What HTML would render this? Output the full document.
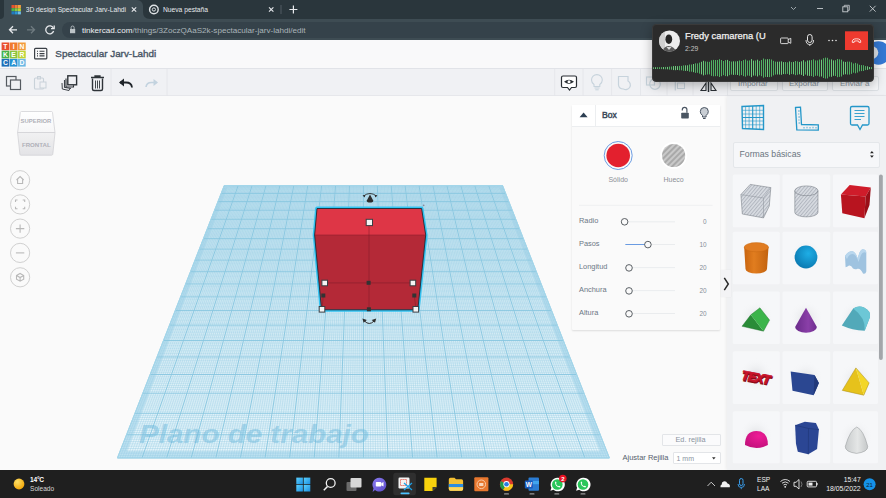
<!DOCTYPE html>
<html><head><meta charset="utf-8">
<style>
*{margin:0;padding:0;box-sizing:border-box}
html,body{width:886px;height:498px;overflow:hidden;background:#fafafa;font-family:"Liberation Sans",sans-serif}
.a{position:absolute}
svg{position:absolute;overflow:visible}
.t{position:absolute;white-space:nowrap;line-height:1}
</style></head><body>

<!-- ===== Chrome tab strip ===== -->
<div class="a" style="left:0;top:0;width:886px;height:19px;background:#2a363c"></div>
<div class="a" style="left:4px;top:0;width:139px;height:19px;background:#3e4c53;border-radius:0 6px 0 0"></div>
<svg style="left:0;top:0" width="886" height="41">
  <path d="M0 19 Q4 19 4 15 V19Z" fill="#3e4c53"/>
  <path d="M143 12 V19 H150 Q143 19 143 12Z" fill="#3e4c53"/>
  <!-- favicon -->
  <g transform="translate(11.5,5)">
    <rect x="0" y="0" width="3" height="3" fill="#e8502f"/><rect x="3.2" y="0" width="3" height="3" fill="#f07a30"/><rect x="6.4" y="0" width="3" height="3" fill="#f4a040"/>
    <rect x="0" y="3.2" width="3" height="3" fill="#4cb748"/><rect x="3.2" y="3.2" width="3" height="3" fill="#8dc63f"/><rect x="6.4" y="3.2" width="3" height="3" fill="#b8d432"/>
    <rect x="0" y="6.4" width="3" height="3" fill="#1f7ac0"/><rect x="3.2" y="6.4" width="3" height="3" fill="#2a96d6"/><rect x="6.4" y="6.4" width="3" height="3" fill="#70bde8"/>
  </g>
  <!-- tab close x -->
  <path d="M131.8 7.3 L136.2 11.7 M136.2 7.3 L131.8 11.7" stroke="#e8eaed" stroke-width="1.1"/>
  <!-- chrome icon tab2 -->
  <circle cx="153.9" cy="9.5" r="4.3" fill="none" stroke="#dfe3e6" stroke-width="1.4"/>
  <circle cx="153.9" cy="9.5" r="1.6" fill="none" stroke="#dfe3e6" stroke-width="1"/>
  <path d="M269 7.3 L273.4 11.7 M273.4 7.3 L269 11.7" stroke="#e8eaed" stroke-width="1.1"/>
  <path d="M281 5 V14" stroke="#5a666c" stroke-width="0.8"/>
  <path d="M293.4 5.5 V13.5 M289.4 9.5 H297.4" stroke="#e8eaed" stroke-width="1.2"/>
  <!-- window controls -->
  <path d="M791 7 L793.5 9.5 L796 7" stroke="#aab3b8" stroke-width="0.9" fill="none"/>
  <path d="M817 8.5 H823" stroke="#c8cdd0" stroke-width="0.9"/>
  <rect x="842.8" y="6.8" width="5" height="5" fill="none" stroke="#c8cdd0" stroke-width="0.9"/>
  <path d="M844.3 6.8 V5.3 H849.3 V10.3 H847.8" stroke="#c8cdd0" stroke-width="0.8" fill="none"/>
  <path d="M869.8 5.8 L875.6 11.6 M875.6 5.8 L869.8 11.6" stroke="#c8cdd0" stroke-width="0.9"/>
</svg>
<div class="t" style="left:25.7px;top:6.6px;font-size:6.7px;color:#e8eaed;width:103px;overflow:hidden">3D design Spectacular Jarv-Lahdi</div>
<div class="t" style="left:163px;top:6.6px;font-size:6.7px;color:#e8eaed">Nueva pestaña</div>

<!-- ===== Chrome toolbar ===== -->
<div class="a" style="left:0;top:19px;width:886px;height:21px;background:#3e4c53"></div>
<div class="a" style="left:62px;top:22.3px;width:824px;height:15.8px;background:#35424a;border-radius:8px 0 0 8px"></div>
<svg style="left:0;top:0" width="886" height="41">
  <path d="M17 29.8 H9.5 M13 26.3 L9.5 29.8 L13 33.3" stroke="#e8eaed" stroke-width="1.3" fill="none"/>
  <path d="M27 29.8 H34.5 M31 26.3 L34.5 29.8 L31 33.3" stroke="#6f7b80" stroke-width="1.3" fill="none"/>
  <path d="M53.3 28 A4 4 0 1 0 53.6 31" stroke="#e8eaed" stroke-width="1.3" fill="none"/>
  <path d="M54.2 25.5 V28.6 H51" stroke="#e8eaed" stroke-width="1.3" fill="none"/>
  <rect x="70" y="29" width="5.2" height="4.2" fill="#bcc3c7"/>
  <path d="M71.1 29 V27.5 A1.5 1.5 0 0 1 74.1 27.5 V29" stroke="#bcc3c7" stroke-width="0.9" fill="none"/>
</svg>
<div class="t" style="left:82px;top:26.8px;font-size:8.1px;color:#aab4b9"><span style="color:#eef0f2">tinkercad.com</span>/things/3ZoczQAaS2k-spectacular-jarv-lahdi/edit</div>

<!-- ===== Tinkercad header ===== -->
<div class="a" style="left:0;top:40px;width:886px;height:29px;background:#f9f9fa;border-bottom:1px solid #e1e3e8"></div>
<svg style="left:0;top:0" width="886" height="100">
  <g transform="translate(1.6,42.5)" font-family="Liberation Sans" font-size="6.8" font-weight="bold" fill="#fff" text-anchor="middle">
    <rect x="0" y="0" width="7.7" height="7.7" fill="#e94f2e"/><rect x="8.2" y="0" width="7.7" height="7.7" fill="#f07b2f"/><rect x="16.4" y="0" width="7.7" height="7.7" fill="#f39c3c"/>
    <rect x="0" y="8.2" width="7.7" height="7.7" fill="#47b34a"/><rect x="8.2" y="8.2" width="7.7" height="7.7" fill="#8cc53f"/><rect x="16.4" y="8.2" width="7.7" height="7.7" fill="#bcd437"/>
    <rect x="0" y="16.4" width="7.7" height="7.7" fill="#1e6fb8"/><rect x="8.2" y="16.4" width="7.7" height="7.7" fill="#2792d3"/><rect x="16.4" y="16.4" width="7.7" height="7.7" fill="#6cb9e5"/>
    <text x="3.85" y="6.3">T</text><text x="12.05" y="6.3">I</text><text x="20.25" y="6.3">N</text>
    <text x="3.85" y="14.5">K</text><text x="12.05" y="14.5">E</text><text x="20.25" y="14.5">R</text>
    <text x="3.85" y="22.7">C</text><text x="12.05" y="22.7">A</text><text x="20.25" y="22.7">D</text>
  </g>
  <!-- menu icon -->
  <rect x="34.6" y="48.3" width="12.2" height="10.6" rx="1" fill="none" stroke="#3a3f45" stroke-width="1.2"/>
  <path d="M37 51.3 H38 M37 53.6 H38 M37 55.9 H38 M39.5 51.3 H44.5 M39.5 53.6 H44.5 M39.5 55.9 H44.5" stroke="#3a3f45" stroke-width="1.1"/>
  <!-- avatar behind popup -->
  <circle cx="878.5" cy="53" r="11.7" fill="#3579d4"/><circle cx="872" cy="52.6" r="6.3" fill="#dfe3e8"/>
</svg>
<div class="t" style="left:55.3px;top:49px;font-size:9.9px;color:#4b5868;-webkit-text-stroke:0.4px #4b5868">Spectacular Jarv-Lahdi</div>

<!-- ===== Tinkercad toolbar ===== -->
<div class="a" style="left:0;top:69px;width:886px;height:27.2px;background:#f0f1f4;border-bottom:1px solid #e6e7eb"></div>
<svg style="left:0;top:0" width="886" height="100">
  <path d="M111 69 V96 M167 69 V96 M554.7 69 V96 M583 69 V96 M611.6 69 V96 M640.5 69 V96 M667 69 V96 M693 69 V96 M727.5 69 V96" stroke="#e2e5e9" stroke-width="0.8"/>
  <!-- copy -->
  <rect x="6.5" y="76.5" width="9.5" height="9.5" fill="none" stroke="#555a60" stroke-width="1.2"/>
  <rect x="10.5" y="80" width="10" height="9.5" fill="#f0f1f4" stroke="#555a60" stroke-width="1.2"/>
  <!-- paste -->
  <rect x="34.5" y="78" width="9" height="11" rx="1" fill="none" stroke="#c9d2d9" stroke-width="1.1"/>
  <rect x="37.5" y="76.5" width="3" height="2.5" fill="none" stroke="#c9d2d9" stroke-width="1"/>
  <rect x="40" y="82" width="6" height="6" fill="#f0f1f4" stroke="#c9d2d9" stroke-width="1"/>
  <!-- duplicate -->
  <path d="M62 83 L62.3 89 L69 90.5 L70 88" stroke="#3f444a" stroke-width="1" fill="none"/>
  <path d="M64.5 80 V87.3 L71 88.5" stroke="#3f444a" stroke-width="1.1" fill="none"/>
  <rect x="67.8" y="75.8" width="8.8" height="9" fill="#f0f1f4" stroke="#2c3136" stroke-width="1.4"/>
  <path d="M66 78.5 V87 H73.5 V85.3" stroke="#2c3136" stroke-width="1.1" fill="none"/>
  <!-- trash -->
  <path d="M91 77.5 H104 M95 77.5 V76 H100 V77.5" stroke="#2f3439" stroke-width="1.3" fill="none"/>
  <path d="M92.5 78.5 V89 Q92.5 90.5 94 90.5 H101 Q102.5 90.5 102.5 89 V78.5" stroke="#2f3439" stroke-width="1.4" fill="none"/>
  <path d="M95.5 80.5 V88.5 M97.5 80.5 V88.5 M99.5 80.5 V88.5" stroke="#2f3439" stroke-width="0.9"/>
  <!-- undo -->
  <path d="M120 82.5 H126 Q131.5 82.5 132 87.5" stroke="#1f2429" stroke-width="1.8" fill="none"/>
  <path d="M119 82.5 L124 78.5 V86.5Z" fill="#1f2429"/>
  <!-- redo -->
  <path d="M157 82.5 H151.5 Q146.5 82.5 146 87" stroke="#c3d3df" stroke-width="1.6" fill="none"/>
  <path d="M158 82.5 L153.5 79 V86Z" fill="#c3d3df"/>
  <!-- eye note -->
  <path d="M563 76 H575 Q576.5 76 576.5 77.5 V86 Q576.5 87.5 575 87.5 H571.5 L569.5 90 L567.5 87.5 H563 Q561.5 87.5 561.5 86 V77.5 Q561.5 76 563 76Z" fill="#fff" stroke="#2a2f34" stroke-width="1.2"/>
  <path d="M564 81.8 Q569 77.5 574 81.8 Q569 86 564 81.8Z" fill="#2a2f34"/>
  <circle cx="569" cy="81.8" r="1.5" fill="#fff"/>
  <!-- bulb -->
  <path d="M594 84.5 Q591.5 82.5 591.5 80 A5.4 5.4 0 0 1 602.3 80 Q602.3 82.5 599.8 84.5 V86.5 H594Z" fill="none" stroke="#c7d3dc" stroke-width="1.1"/>
  <path d="M594.5 88 H599.5 M595.3 89.8 H598.7" stroke="#c7d3dc" stroke-width="1"/>
  <!-- group -->
  <path d="M618.5 76.5 H628 V81 A4.5 4.5 0 1 1 623.5 89 Q619 89 618.5 85Z" fill="none" stroke="#c7d3dc" stroke-width="1.2"/>
  <!-- ungroup -->
  <rect x="646.5" y="77" width="8" height="8" fill="none" stroke="#c7d3dc" stroke-width="1.1"/><circle cx="655" cy="84" r="5.3" fill="none" stroke="#c7d3dc" stroke-width="1.2"/>
  <!-- align -->
  <path d="M675.3 81.5 V90.5" stroke="#c7d3dc" stroke-width="1.2"/><rect x="677.5" y="83" width="7" height="5.5" fill="none" stroke="#c7d3dc" stroke-width="1"/>
  <!-- mirror -->
  <path d="M708.5 80 V92" stroke="#2b3035" stroke-width="1.5"/>
  <path d="M706 83 L701 90.5 H706Z M711 83 L716 90.5 H711Z" fill="none" stroke="#2b3035" stroke-width="1.1"/>
</svg>
<!-- Import/Export/Send buttons (under popup) -->
<div class="a" style="left:730px;top:76px;width:47.5px;height:14.5px;border:1px solid #dde1e5;border-radius:2px;background:#f6f7f9"></div>
<div class="a" style="left:781.7px;top:76px;width:46.5px;height:14.5px;border:1px solid #dde1e5;border-radius:2px;background:#f6f7f9"></div>
<div class="a" style="left:831.7px;top:76px;width:47.5px;height:14.5px;border:1px solid #dde1e5;border-radius:2px;background:#f6f7f9"></div>
<div class="t" style="left:738px;top:79.5px;font-size:8px;color:#8a96a2">Importar</div>
<div class="t" style="left:789px;top:79.5px;font-size:8px;color:#8a96a2">Exportar</div>
<div class="t" style="left:840px;top:79.5px;font-size:8px;color:#8a96a2">Enviar a</div>

<!-- ===== Workplane grid ===== -->
<svg style="left:0;top:0" width="886" height="470">
<polygon points="224.25,185.5 502.55,185.5 609.40,458.0 117.40,458.0" fill="#bde1f1"/><defs><linearGradient id="gfill" x1="0" y1="185.5" x2="0" y2="458.0" gradientUnits="userSpaceOnUse"><stop offset="0" stop-color="#d2ecf6"/><stop offset="0.45" stop-color="#e0f2f9"/><stop offset="1" stop-color="#e6f5fb"/></linearGradient></defs><polygon points="227.32,187.67 499.48,187.67 599.97,451.33 126.83,451.33" fill="url(#gfill)"/><path d="M225.64 185.5L119.86 458.0M223.95 186.27H502.85M227.03 185.5L122.32 458.0M223.64 187.05H503.16M228.42 185.5L124.78 458.0M223.34 187.83H503.46M229.82 185.5L127.24 458.0M223.03 188.61H503.77M231.21 185.5L129.70 458.0M222.72 189.40H504.08M232.60 185.5L132.16 458.0M222.41 190.19H504.39M233.99 185.5L134.62 458.0M222.10 190.98H504.70M235.38 185.5L137.08 458.0M221.79 191.77H505.01M236.77 185.5L139.54 458.0M221.48 192.57H505.32M239.56 185.5L144.46 458.0M220.84 194.19H505.96M240.95 185.5L146.92 458.0M220.53 195.00H506.27M242.34 185.5L149.38 458.0M220.21 195.81H506.59M243.73 185.5L151.84 458.0M219.89 196.63H506.91M245.12 185.5L154.30 458.0M219.56 197.45H507.24M246.51 185.5L156.76 458.0M219.24 198.28H507.56M247.91 185.5L159.22 458.0M218.92 199.10H507.88M249.30 185.5L161.68 458.0M218.59 199.94H508.21M250.69 185.5L164.14 458.0M218.26 200.77H508.54M253.47 185.5L169.06 458.0M217.60 202.46H509.20M254.86 185.5L171.52 458.0M217.27 203.31H509.53M256.25 185.5L173.98 458.0M216.93 204.16H509.87M257.65 185.5L176.44 458.0M216.60 205.01H510.20M259.04 185.5L178.90 458.0M216.26 205.87H510.54M260.43 185.5L181.36 458.0M215.92 206.74H510.88M261.82 185.5L183.82 458.0M215.58 207.61H511.22M263.21 185.5L186.28 458.0M215.24 208.48H511.56M264.60 185.5L188.74 458.0M214.90 209.35H511.90M267.39 185.5L193.66 458.0M214.21 211.12H512.59M268.78 185.5L196.12 458.0M213.86 212.00H512.94M270.17 185.5L198.58 458.0M213.51 212.90H513.29M271.56 185.5L201.04 458.0M213.16 213.79H513.64M272.95 185.5L203.50 458.0M212.80 214.69H514.00M274.34 185.5L205.96 458.0M212.45 215.60H514.35M275.74 185.5L208.42 458.0M212.09 216.51H514.71M277.13 185.5L210.88 458.0M211.73 217.42H515.07M278.52 185.5L213.34 458.0M211.37 218.34H515.43M281.30 185.5L218.26 458.0M210.65 220.19H516.15M282.69 185.5L220.72 458.0M210.28 221.12H516.52M284.08 185.5L223.18 458.0M209.92 222.05H516.88M285.48 185.5L225.64 458.0M209.55 222.99H517.25M286.87 185.5L228.10 458.0M209.18 223.94H517.62M288.26 185.5L230.56 458.0M208.81 224.89H517.99M289.65 185.5L233.02 458.0M208.43 225.84H518.37M291.04 185.5L235.48 458.0M208.06 226.80H518.74M292.43 185.5L237.94 458.0M207.68 227.76H519.12M295.22 185.5L242.86 458.0M206.92 229.70H519.88M296.61 185.5L245.32 458.0M206.54 230.68H520.26M298.00 185.5L247.78 458.0M206.15 231.66H520.65M299.39 185.5L250.24 458.0M205.76 232.65H521.04M300.78 185.5L252.70 458.0M205.37 233.64H521.43M302.17 185.5L255.16 458.0M204.98 234.63H521.82M303.57 185.5L257.62 458.0M204.59 235.64H522.21M304.96 185.5L260.08 458.0M204.20 236.64H522.60M306.35 185.5L262.54 458.0M203.80 237.65H523.00M309.13 185.5L267.46 458.0M203.00 239.69H523.80M310.52 185.5L269.92 458.0M202.60 240.72H524.20M311.91 185.5L272.38 458.0M202.19 241.75H524.61M313.31 185.5L274.84 458.0M201.79 242.79H525.01M314.70 185.5L277.30 458.0M201.38 243.83H525.42M316.09 185.5L279.76 458.0M200.97 244.88H525.83M317.48 185.5L282.22 458.0M200.55 245.93H526.25M318.87 185.5L284.68 458.0M200.14 246.99H526.66M320.26 185.5L287.14 458.0M199.72 248.05H527.08M323.05 185.5L292.06 458.0M198.88 250.20H527.92M324.44 185.5L294.52 458.0M198.46 251.28H528.34M325.83 185.5L296.98 458.0M198.03 252.36H528.77M327.22 185.5L299.44 458.0M197.61 253.45H529.19M328.61 185.5L301.90 458.0M197.18 254.55H529.62M330.00 185.5L304.36 458.0M196.74 255.65H530.06M331.40 185.5L306.82 458.0M196.31 256.76H530.49M332.79 185.5L309.28 458.0M195.87 257.87H530.93M334.18 185.5L311.74 458.0M195.43 258.99H531.37M336.96 185.5L316.66 458.0M194.55 261.25H532.25M338.35 185.5L319.12 458.0M194.10 262.39H532.70M339.74 185.5L321.58 458.0M193.65 263.53H533.15M341.14 185.5L324.04 458.0M193.20 264.68H533.60M342.53 185.5L326.50 458.0M192.75 265.84H534.05M343.92 185.5L328.96 458.0M192.29 267.00H534.51M345.31 185.5L331.42 458.0M191.83 268.17H534.97M346.70 185.5L333.88 458.0M191.37 269.35H535.43M348.09 185.5L336.34 458.0M190.91 270.53H535.89M350.88 185.5L341.26 458.0M189.98 272.91H536.82M352.27 185.5L343.72 458.0M189.51 274.11H537.29M353.66 185.5L346.18 458.0M189.03 275.32H537.77M355.05 185.5L348.64 458.0M188.56 276.53H538.24M356.44 185.5L351.10 458.0M188.08 277.75H538.72M357.83 185.5L353.56 458.0M187.60 278.98H539.20M359.23 185.5L356.02 458.0M187.11 280.21H539.69M360.62 185.5L358.48 458.0M186.63 281.45H540.17M362.01 185.5L360.94 458.0M186.14 282.70H540.66M364.79 185.5L365.86 458.0M185.15 285.21H541.65M366.18 185.5L368.32 458.0M184.65 286.48H542.15M367.57 185.5L370.78 458.0M184.15 287.76H542.65M368.97 185.5L373.24 458.0M183.65 289.04H543.15M370.36 185.5L375.70 458.0M183.15 290.33H543.65M371.75 185.5L378.16 458.0M182.64 291.62H544.16M373.14 185.5L380.62 458.0M182.13 292.93H544.67M374.53 185.5L383.08 458.0M181.61 294.24H545.19M375.92 185.5L385.54 458.0M181.09 295.56H545.71M378.71 185.5L390.46 458.0M180.05 298.22H546.75M380.10 185.5L392.92 458.0M179.53 299.56H547.27M381.49 185.5L395.38 458.0M179.00 300.91H547.80M382.88 185.5L397.84 458.0M178.46 302.27H548.34M384.27 185.5L400.30 458.0M177.93 303.63H548.87M385.66 185.5L402.76 458.0M177.39 305.01H549.41M387.06 185.5L405.22 458.0M176.85 306.39H549.95M388.45 185.5L407.68 458.0M176.30 307.78H550.50M389.84 185.5L410.14 458.0M175.76 309.18H551.04M392.62 185.5L415.06 458.0M174.65 312.00H552.15M394.01 185.5L417.52 458.0M174.09 313.42H552.71M395.40 185.5L419.98 458.0M173.53 314.85H553.27M396.80 185.5L422.44 458.0M172.97 316.29H553.83M398.19 185.5L424.90 458.0M172.40 317.73H554.40M399.58 185.5L427.36 458.0M171.83 319.19H554.97M400.97 185.5L429.82 458.0M171.25 320.66H555.55M402.36 185.5L432.28 458.0M170.68 322.13H556.12M403.75 185.5L434.74 458.0M170.09 323.61H556.71M406.54 185.5L439.66 458.0M168.92 326.61H557.88M407.93 185.5L442.12 458.0M168.33 328.12H558.47M409.32 185.5L444.58 458.0M167.73 329.64H559.07M410.71 185.5L447.04 458.0M167.13 331.16H559.67M412.10 185.5L449.50 458.0M166.53 332.70H560.27M413.49 185.5L451.96 458.0M165.92 334.25H560.88M414.89 185.5L454.42 458.0M165.31 335.81H561.49M416.28 185.5L456.88 458.0M164.70 337.37H562.10M417.67 185.5L459.34 458.0M164.08 338.95H562.72M420.45 185.5L464.26 458.0M162.83 342.13H563.97M421.84 185.5L466.72 458.0M162.20 343.74H564.60M423.23 185.5L469.18 458.0M161.57 345.35H565.23M424.63 185.5L471.64 458.0M160.93 346.98H565.87M426.02 185.5L474.10 458.0M160.29 348.62H566.51M427.41 185.5L476.56 458.0M159.64 350.26H567.16M428.80 185.5L479.02 458.0M158.99 351.92H567.81M430.19 185.5L481.48 458.0M158.34 353.59H568.46M431.58 185.5L483.94 458.0M157.68 355.27H569.12M434.37 185.5L488.86 458.0M156.35 358.66H570.45M435.76 185.5L491.32 458.0M155.68 360.37H571.12M437.15 185.5L493.78 458.0M155.01 362.10H571.79M438.54 185.5L496.24 458.0M154.33 363.83H572.47M439.93 185.5L498.70 458.0M153.64 365.58H573.16M441.32 185.5L501.16 458.0M152.95 367.33H573.85M442.72 185.5L503.62 458.0M152.26 369.10H574.54M444.11 185.5L506.08 458.0M151.56 370.88H575.24M445.50 185.5L508.54 458.0M150.86 372.67H575.94M448.28 185.5L513.46 458.0M149.44 376.29H577.36M449.67 185.5L515.92 458.0M148.72 378.12H578.08M451.06 185.5L518.38 458.0M148.00 379.96H578.80M452.46 185.5L520.84 458.0M147.27 381.82H579.53M453.85 185.5L523.30 458.0M146.54 383.68H580.26M455.24 185.5L525.76 458.0M145.80 385.56H581.00M456.63 185.5L528.22 458.0M145.06 387.45H581.74M458.02 185.5L530.68 458.0M144.32 389.35H582.48M459.41 185.5L533.14 458.0M143.56 391.27H583.24M462.20 185.5L538.06 458.0M142.05 395.15H584.75M463.59 185.5L540.52 458.0M141.28 397.10H585.52M464.98 185.5L542.98 458.0M140.51 399.07H586.29M466.37 185.5L545.44 458.0M139.73 401.06H587.07M467.76 185.5L547.90 458.0M138.94 403.06H587.86M469.15 185.5L550.36 458.0M138.16 405.07H588.64M470.55 185.5L552.82 458.0M137.36 407.09H589.44M471.94 185.5L555.28 458.0M136.56 409.14H590.24M473.33 185.5L557.74 458.0M135.75 411.19H591.05M476.11 185.5L562.66 458.0M134.13 415.35H592.67M477.50 185.5L565.12 458.0M133.30 417.45H593.50M478.89 185.5L567.58 458.0M132.47 419.56H594.33M480.29 185.5L570.04 458.0M131.64 421.69H595.16M481.68 185.5L572.50 458.0M130.80 423.84H596.00M483.07 185.5L574.96 458.0M129.95 426.00H596.85M484.46 185.5L577.42 458.0M129.09 428.18H597.71M485.85 185.5L579.88 458.0M128.23 430.37H598.57M487.24 185.5L582.34 458.0M127.37 432.58H599.43M490.03 185.5L587.26 458.0M125.62 437.05H601.18M491.42 185.5L589.72 458.0M124.73 439.30H602.07M492.81 185.5L592.18 458.0M123.84 441.58H602.96M494.20 185.5L594.64 458.0M122.94 443.87H603.86M495.59 185.5L597.10 458.0M122.03 446.18H604.77M496.98 185.5L599.56 458.0M121.12 448.51H605.68M498.38 185.5L602.02 458.0M120.20 450.86H606.60M499.77 185.5L604.48 458.0M119.27 453.22H607.53M501.16 185.5L606.94 458.0M118.34 455.60H608.46" stroke="#97cde3" stroke-width="0.4" fill="none"/><path d="M224.25 185.5L117.40 458.0M224.25 185.50H502.55M238.16 185.5L142.00 458.0M221.16 193.38H505.64M252.08 185.5L166.60 458.0M217.93 201.61H508.87M266.00 185.5L191.20 458.0M214.55 210.23H512.25M279.91 185.5L215.80 458.0M211.01 219.26H515.79M293.82 185.5L240.40 458.0M207.30 228.73H519.50M307.74 185.5L265.00 458.0M203.40 238.67H523.40M321.65 185.5L289.60 458.0M199.30 249.12H527.50M335.57 185.5L314.20 458.0M194.99 260.12H531.81M349.48 185.5L338.80 458.0M190.44 271.71H536.36M363.40 185.5L363.40 458.0M185.65 283.95H541.15M377.31 185.5L388.00 458.0M180.57 296.89H546.23M391.23 185.5L412.60 458.0M175.20 310.58H551.60M405.14 185.5L437.20 458.0M169.51 325.11H557.29M419.06 185.5L461.80 458.0M163.46 340.54H563.34M432.97 185.5L486.40 458.0M157.02 356.96H569.78M446.89 185.5L511.00 458.0M150.15 374.48H576.65M460.80 185.5L535.60 458.0M142.81 393.20H583.99M474.72 185.5L560.20 458.0M134.94 413.26H591.86M488.63 185.5L584.80 458.0M126.50 434.80H600.30M502.55 185.5L609.40 458.0M117.40 458.00H609.40" stroke="#88c6df" stroke-width="0.95" fill="none"/><polygon points="224.25,185.5 502.55,185.5 609.40,458.0 117.40,458.0" fill="none" stroke="#a9d9ec" stroke-width="0.8"/>
</svg>
<div class="t" style="left:138.5px;top:421px;font-size:26.5px;font-weight:bold;font-style:italic;color:rgba(112,186,220,0.5);transform-origin:0 0;transform:scaleX(1.115)">Plano de trabajo</div>

<!-- ===== Red box ===== -->
<svg style="left:0;top:0" width="886" height="470">
  <polygon points="317,208.5 421.6,208.5 425.7,235 417.8,309.8 321.5,309.8 314.6,235" fill="none" stroke="#33c3f2" stroke-width="3.8" stroke-linejoin="round"/>
  <polygon points="317,208.5 421.6,208.5 425.7,235 314.6,235" fill="#de3646"/>
  <polygon points="314.6,235 425.7,235 417.8,309.8 321.5,309.8" fill="#b42937"/>
  <polygon points="317,208.5 421.6,208.5 425.7,235 417.8,309.8 321.5,309.8 314.6,235" fill="none" stroke="#1d2b38" stroke-width="0.9" stroke-linejoin="round"/>
  <path d="M314.6 235 H425.7" stroke="#8e1f2b" stroke-width="0.6"/>
  <path d="M369 222 V309 M325 282.9 H413 M323.3 295.5 L322 309 M414.3 295.5 L416 309" stroke="#7d1c28" stroke-width="0.5"/>
  <rect x="366.2" y="219.3" width="6.3" height="6.3" fill="#f4f4f4" stroke="#3b3f44" stroke-width="1"/>
  <rect x="321.9" y="280.2" width="5.6" height="5.6" fill="#f4f4f4" stroke="#3b3f44" stroke-width="1"/>
  <rect x="410.1" y="280.2" width="5.6" height="5.6" fill="#f4f4f4" stroke="#3b3f44" stroke-width="1"/>
  <rect x="319.2" y="306.5" width="5.6" height="5.6" fill="#f4f4f4" stroke="#3b3f44" stroke-width="1"/>
  <rect x="413" y="306.5" width="5.6" height="5.6" fill="#f4f4f4" stroke="#3b3f44" stroke-width="1"/>
  <rect x="366.6" y="280.8" width="4" height="4" fill="#333"/>
  <rect x="321.3" y="293.5" width="4" height="4" fill="#333"/>
  <rect x="412.3" y="293.5" width="4" height="4" fill="#333"/>
  <rect x="366.9" y="307.3" width="4" height="4" fill="#333"/>
  <circle cx="423.7" cy="205.4" r="0.8" fill="#889"/>
  <!-- rotate top -->
  <path d="M363.5 196 Q370 191 376.5 196" stroke="#2d2d2d" stroke-width="0.9" fill="none"/>
  <path d="M362.5 195.3 L364.8 197.5 L365.2 195Z M377.5 195.3 L375.2 197.5 L374.8 195Z" fill="#2d2d2d"/>
  <path d="M370 194.6 L373.2 200.5 Q373.5 202.6 370 202.6 Q366.5 202.6 366.8 200.5Z" fill="#2d2d2d"/>
  <!-- rotate bottom -->
  <g transform="translate(0,1.2)">
  <path d="M364.5 319.8 Q369.3 324.8 374.1 319.8" stroke="#2d2d2d" stroke-width="1" fill="none"/>
  <path d="M362.4 317.3 L366.9 318.7 L363.6 321.6Z M376.2 317.3 L371.7 318.7 L375 321.6Z" fill="#2d2d2d"/>
  </g>
</svg>

<!-- ===== View cube + nav ===== -->
<svg style="left:0;top:0" width="120" height="300">
  <defs>
    <linearGradient id="vcT" x1="0" y1="0" x2="0" y2="1"><stop offset="0" stop-color="#ffffff"/><stop offset="1" stop-color="#f6f6f7"/></linearGradient>
    <linearGradient id="vcF" x1="0" y1="0" x2="0" y2="1"><stop offset="0" stop-color="#f1f1f2"/><stop offset="1" stop-color="#e3e3e6"/></linearGradient>
  </defs>
  <path d="M21.5 111.5 H51.5 Q52.3 111.5 52.5 112.5 L55 132.5 H17.6 L20.3 112.5 Q20.5 111.5 21.5 111.5Z" fill="url(#vcT)" stroke="#d2d2d6" stroke-width="0.8"/>
  <path d="M17.6 132.5 H55 L52.8 154.2 Q52.6 155.2 51.6 155.2 H21 Q20 155.2 19.9 154.2Z" fill="url(#vcF)" stroke="#d2d2d6" stroke-width="0.8"/>
  <g fill="none" stroke="#d0d0d0" stroke-width="1">
    <circle cx="20.1" cy="180.2" r="9.6"/><circle cx="20.1" cy="204.4" r="9.6"/><circle cx="20.1" cy="228.6" r="9.6"/><circle cx="20.1" cy="252.9" r="9.6"/><circle cx="20.1" cy="277.3" r="9.6"/>
  </g>
  <g fill="none" stroke="#b9b9b9" stroke-width="1.1">
    <path d="M16.5 180 L20.1 176.6 L23.7 180 M17.6 179 V183.5 H22.6 V179"/>
    <path d="M15.5 202 V200 H17.5 M22.7 200 H24.7 V202 M24.7 206.8 V208.8 H22.7 M17.5 208.8 H15.5 V206.8"/>
    <path d="M20.1 224.4 V232.8 M15.9 228.6 H24.3"/>
    <path d="M15.9 252.9 H24.3"/>
    <path d="M16.5 275.5 L20.1 273.5 L23.7 275.5 V279.2 L20.1 281.2 L16.5 279.2Z M16.5 275.5 L20.1 277.5 L23.7 275.5 M20.1 277.5 V281.2"/>
  </g>
</svg>
<div class="t" style="left:16px;top:119.3px;width:40px;text-align:center;font-size:5.9px;font-weight:bold;color:#b0b0b8">SUPERIOR</div>
<div class="t" style="left:16.3px;top:142.4px;width:40px;text-align:center;font-size:6.1px;font-weight:bold;color:#b0b0b8">FRONTAL</div>

<!-- ===== Inspector panel ===== -->
<div class="a" style="left:572px;top:104.5px;width:148px;height:225.5px;background:#fafafa;box-shadow:0 1px 2px rgba(0,0,0,0.12);border-radius:1px"></div>
<div class="a" style="left:572px;top:104.5px;width:148px;height:22.5px;background:#fff;border-bottom:1px solid #eceef0"></div>
<div class="a" style="left:595px;top:104.5px;width:1px;height:22.5px;background:#eceef0"></div>
<svg style="left:0;top:0" width="886" height="470">
  <path d="M579.6 117.3 L583.6 112.6 L587.6 117.3Z" fill="#2c3e52"/>
  <!-- lock -->
  <rect x="681.2" y="112.8" width="7.6" height="5.8" rx="0.8" fill="#4a5562"/>
  <path d="M686.9 112.8 V109.6 A2.3 2.3 0 0 0 682.3 109.6 V110.4" stroke="#4a5562" stroke-width="1.2" fill="none"/>
  <!-- bulb -->
  <path d="M702.5 115.5 Q700.3 113.8 700.3 111.5 A4 4 0 0 1 708.3 111.5 Q708.3 113.8 706.1 115.5 V117 H702.5Z" fill="#c9ced4" stroke="#4a5562" stroke-width="1"/>
  <path d="M703 118.5 H705.6" stroke="#4a5562" stroke-width="1"/>
  <!-- solid / hole -->
  <circle cx="618.2" cy="155.5" r="14" fill="none" stroke="#5b92e0" stroke-width="0.9"/>
  <circle cx="618.2" cy="155.5" r="11.8" fill="#e3202e"/>
  <defs>
    <pattern id="hstripe" width="4" height="4" patternUnits="userSpaceOnUse" patternTransform="rotate(45)">
      <rect width="4" height="4" fill="#c9c9c9"/><rect width="2" height="4" fill="#a9a9a9"/>
    </pattern>
  </defs>
  <circle cx="673.6" cy="155.5" r="13.5" fill="#fff"/>
  <circle cx="673.6" cy="155.5" r="11.6" fill="url(#hstripe)"/>
  <path d="M579 205.4 H712.5" stroke="#eceef0" stroke-width="0.8"/>
  <!-- sliders -->
  <g stroke="#e6e8eb" stroke-width="0.8">
    <path d="M625 221.8 H675 M625 244.5 H675 M625 267.6 H675 M625 290.6 H675 M625 313.5 H675"/>
  </g>
  <path d="M625.4 244.5 H645" stroke="#5b92e0" stroke-width="0.9"/>
  <g fill="#fafafa" stroke="#4a4f55" stroke-width="0.9">
    <circle cx="624.6" cy="221.8" r="3.3"/><circle cx="647.9" cy="244.6" r="3.3"/><circle cx="629" cy="267.9" r="3.3"/><circle cx="629" cy="290.9" r="3.3"/><circle cx="629" cy="313.8" r="3.3"/>
  </g>
</svg>
<div class="t" style="left:602px;top:111.3px;font-size:8.6px;color:#3b4a5a;-webkit-text-stroke:0.45px #3b4a5a">Box</div>
<div class="t" style="left:598.2px;top:175.5px;width:40px;text-align:center;font-size:7px;color:#8c9097">Sólido</div>
<div class="t" style="left:653.6px;top:175.5px;width:40px;text-align:center;font-size:7px;color:#8c9097">Hueco</div>
<div class="t" style="left:579px;top:217.2px;font-size:7.4px;color:#6c7885">Radio</div>
<div class="t" style="left:579px;top:240.2px;font-size:7.4px;color:#6c7885">Pasos</div>
<div class="t" style="left:579px;top:263.2px;font-size:7.4px;color:#6c7885">Longitud</div>
<div class="t" style="left:579px;top:286.2px;font-size:7.4px;color:#6c7885">Anchura</div>
<div class="t" style="left:579px;top:309.2px;font-size:7.4px;color:#6c7885">Altura</div>
<div class="t" style="left:690px;top:218.5px;width:16.5px;text-align:right;font-size:6.4px;color:#858e97">0</div>
<div class="t" style="left:690px;top:241.5px;width:16.5px;text-align:right;font-size:6.4px;color:#858e97">10</div>
<div class="t" style="left:690px;top:264.5px;width:16.5px;text-align:right;font-size:6.4px;color:#858e97">20</div>
<div class="t" style="left:690px;top:287.5px;width:16.5px;text-align:right;font-size:6.4px;color:#858e97">20</div>
<div class="t" style="left:690px;top:310.5px;width:16.5px;text-align:right;font-size:6.4px;color:#858e97">20</div>

<!-- ===== Bottom-right grid controls ===== -->
<div class="a" style="left:661.5px;top:434px;width:59.5px;height:12px;border:1px solid #e3e5e8;border-radius:1px;background:#fbfbfc"></div>
<div class="t" style="left:675.5px;top:436.2px;font-size:7.3px;color:#8a949e">Ed. rejilla</div>
<div class="t" style="left:622.5px;top:454px;font-size:7.5px;color:#56616d">Ajustar Rejilla</div>
<div class="a" style="left:672.6px;top:452px;width:48.4px;height:12px;border:1px solid #e3e5e8;border-radius:1px;background:#fff"></div>
<div class="t" style="left:676.5px;top:454.5px;font-size:7px;color:#8a949e">1 mm</div>
<svg style="left:0;top:0" width="886" height="470"><path d="M712 457.3 L713.8 459.5 L715.6 457.3Z" fill="#333"/></svg>

<!-- ===== Right shapes panel ===== -->
<div class="a" style="left:727px;top:96px;width:159px;height:374px;background:#f0f1f3;box-shadow:-1px 0 3px rgba(0,0,0,0.06)"></div>
<!-- chevron tab -->
<div class="a" style="left:721px;top:270.4px;width:9.7px;height:26.6px;background:#f3f3f5;box-shadow:0 0 1px rgba(0,0,0,0.08)"></div>
<svg style="left:0;top:0" width="886" height="470">
  <path d="M724.3 277.9 L728.3 284 L724.3 290.1" stroke="#2a2a2a" stroke-width="1.5" fill="none" stroke-linejoin="miter"/>
  <!-- grid icon -->
  <g stroke="#2497c9" fill="none">
    <path d="M742 106.5 L763.5 105.5 L763.5 129.5 L742.5 128.5Z" stroke-width="1.4"/>
    <path d="M745.6 106.4 V128.6 M749.1 106.3 V128.8 M756.2 106 V129.1 M759.7 105.9 V129.2 M742.2 110.3 H763.5 M742.3 114 H763.5 M742.4 121 H763.5 M742.4 124.8 H763.5" stroke-width="0.6"/><path d="M752.7 106 V129 M742.3 117.5 H763.5" stroke-width="1.1"/>
  </g>
  <!-- ruler icon -->
  <path d="M795.5 107.5 L800.5 107.2 L801.5 124.5 L818.3 124.8 L818.3 130.2 L796.8 129.8Z" fill="none" stroke="#2497c9" stroke-width="1.3"/>
  <path d="M798 111 H799.8 M798.2 114 H799.3 M798.3 117 H800 M798.4 120 H799.5 M798.5 123 H800.2 M804 127 V128.5 M807 126.8 V128.3 M810 127 V128.5 M813 126.8 V128.3 M816 127 V128.5" stroke="#2497c9" stroke-width="0.8"/>
  <!-- notes icon -->
  <path d="M852 106.5 H867.5 Q869 106.5 869 108 V123.5 Q869 125 867.5 125 H862.5 L860 129.5 L857.5 125 H852 Q850.5 125 850.5 123.5 V108 Q850.5 106.5 852 106.5Z" fill="none" stroke="#2497c9" stroke-width="1.3"/>
  <path d="M854.5 110.5 H864.5 M854.5 113.5 H864.5 M854.5 116.5 H864.5 M854.5 119.5 H861" stroke="#2497c9" stroke-width="0.9"/>
</svg>
<div class="a" style="left:733.2px;top:141.8px;width:146.6px;height:26.4px;background:#f6f7f9;border:1px solid #e4e7ea;border-radius:2px"></div>
<div class="t" style="left:739.5px;top:149.5px;font-size:8.7px;color:#6a7580">Formas básicas</div>
<svg style="left:0;top:0" width="886" height="470">
  <path d="M870 153.3 L871.9 151 L873.8 153.3Z M870 155.5 L871.9 157.8 L873.8 155.5Z" fill="#222"/>
</svg>
<svg style="left:0;top:0" width="886" height="470">
  <defs>
    <pattern id="gstripe" width="2.6" height="2.6" patternUnits="userSpaceOnUse" patternTransform="rotate(40)">
      <rect width="2.6" height="2.6" fill="#d8dce2"/><rect width="1" height="2.6" fill="#b1b6bf"/>
    </pattern>
    <radialGradient id="shd" cx="0.5" cy="0.5" r="0.5"><stop offset="0" stop-color="#dfe0e3"/><stop offset="1" stop-color="#f5f6f8" stop-opacity="0"/></radialGradient>
    <linearGradient id="orng" x1="0" y1="0" x2="1" y2="0"><stop offset="0" stop-color="#c8640f"/><stop offset="0.4" stop-color="#e17d1f"/><stop offset="1" stop-color="#c2620f"/></linearGradient>
    <radialGradient id="blu" cx="0.6" cy="0.35" r="0.7"><stop offset="0" stop-color="#1eaee6"/><stop offset="1" stop-color="#0a78b0"/></radialGradient>
    <radialGradient id="mag" cx="0.6" cy="0.3" r="0.8"><stop offset="0" stop-color="#ee1c96"/><stop offset="1" stop-color="#c0107a"/></radialGradient>
    <linearGradient id="wht" x1="0" y1="0" x2="1" y2="0"><stop offset="0" stop-color="#c9cccd"/><stop offset="0.55" stop-color="#e4e6e6"/><stop offset="1" stop-color="#c5c8c9"/></linearGradient>
    <linearGradient id="purp" x1="0" y1="0" x2="1" y2="0"><stop offset="0" stop-color="#6a2b8a"/><stop offset="0.6" stop-color="#8a3fa8"/><stop offset="1" stop-color="#6e2d8e"/></linearGradient>
  </defs>
  <g fill="#f6f7f9">
    <rect x="732.8" y="174.4" width="47" height="52.9" rx="1.5"/><rect x="782.5" y="174.4" width="47.8" height="52.9" rx="1.5"/><rect x="833" y="174.4" width="45" height="52.9" rx="1.5"/>
    <rect x="732.8" y="231.7" width="47" height="52.5" rx="1.5"/><rect x="782.5" y="231.7" width="47.8" height="52.5" rx="1.5"/><rect x="833" y="231.7" width="45" height="52.5" rx="1.5"/>
    <rect x="732.8" y="291.4" width="47" height="52.6" rx="1.5"/><rect x="782.5" y="291.4" width="47.8" height="52.6" rx="1.5"/><rect x="833" y="291.4" width="45" height="52.6" rx="1.5"/>
    <rect x="732.8" y="351.2" width="47" height="52.8" rx="1.5"/><rect x="782.5" y="351.2" width="47.8" height="52.8" rx="1.5"/><rect x="833" y="351.2" width="45" height="52.8" rx="1.5"/>
    <rect x="732.8" y="411.2" width="47" height="52" rx="1.5"/><rect x="782.5" y="411.2" width="47.8" height="52" rx="1.5"/><rect x="833" y="411.2" width="45" height="52" rx="1.5"/>
  </g>
  <!-- scrollbar -->
  <rect x="879" y="174.4" width="3.8" height="185.6" rx="1.9" fill="#a3a6aa"/>
  <!-- shadows -->
  <g fill="url(#shd)">
    <ellipse cx="756" cy="318" rx="17" ry="17"/><ellipse cx="806" cy="318" rx="17" ry="17"/><ellipse cx="856" cy="318" rx="17" ry="17"/>
    <ellipse cx="756" cy="375" rx="17" ry="17"/><ellipse cx="806" cy="378" rx="17" ry="17"/><ellipse cx="856" cy="380" rx="17" ry="17"/>
    <ellipse cx="756" cy="435" rx="17" ry="17"/><ellipse cx="806" cy="437" rx="17" ry="17"/><ellipse cx="856" cy="437" rx="17" ry="17"/>
    <ellipse cx="806" cy="255" rx="16" ry="16"/>
  </g>
  <!-- box hole -->
  <g stroke="#6d727a" stroke-width="0.5" stroke-linejoin="round">
    <path d="M740.9 194.6 L750.2 184.4 L770.8 187.6 L769.3 206 L763.5 217.9 L742.3 214Z" fill="url(#gstripe)"/>
    <path d="M740.9 194.6 L763.5 198 L770.8 187.6 M763.5 198 V217.9" fill="none" stroke="#8b9098"/>
  </g>
  <!-- cylinder hole -->
  <path d="M794.8 190.8 V212.3 A11.6 4.6 0 0 0 818 212.3 V190.8Z" fill="url(#gstripe)" stroke="#6d727a" stroke-width="0.5"/>
  <ellipse cx="806.4" cy="190.8" rx="11.6" ry="4.9" fill="url(#gstripe)" stroke="#6d727a" stroke-width="0.5"/>
  <!-- red box -->
  <path d="M840.9 194.6 L849.7 185 L870.8 187.6 L865.6 196.4Z" fill="#cf1c2a"/>
  <path d="M840.9 194.6 L865.6 196.4 L864.4 218.3 L842.3 213.2Z" fill="#b8141f"/>
  <path d="M865.6 196.4 L870.8 187.6 L869.5 205 L864.4 218.3Z" fill="#9a0f18"/>
  <!-- orange cylinder -->
  <path d="M744.2 247.2 L745.5 269 A10.7 4.5 0 0 0 767 269 L768.5 247.2Z" fill="url(#orng)"/>
  <ellipse cx="756.35" cy="247.2" rx="12.15" ry="4.6" fill="#e07c22" stroke="#c2650f" stroke-width="0.4"/>
  <!-- blue sphere -->
  <circle cx="806" cy="257" r="11.4" fill="url(#blu)"/>
  <!-- wavy -->
  <path d="M845 256 Q848 251 852.5 251.3 Q855.5 252 857.8 258.5 Q859.5 250 862.5 249.3 Q866.3 249.3 866.3 253 L866.3 271.5 Q865.5 274.5 863 273.5 Q860.5 268 857.5 268.8 Q855 270 853 268.5 Q850.5 264 847.5 266.5 L845.6 267.3Z" fill="#9fc3e0"/>
  <path d="M845 256 Q848 251 852.5 251.3 Q855.5 252 857.8 258.5 Q859.5 250 862.5 249.3 Q866.3 249.3 866.3 253 Q863 251 861 255 L858.5 262 Q856 254 852.5 254 Q849 254 847 259Z" fill="#b9d7ee"/>
  <!-- green wedge -->
  <path d="M742 326.3 L750.8 314.8 L763.5 331.2Z" fill="#2a8c38"/>
  <path d="M750.8 314.8 L759.9 307.8 L769.6 320.1 L763.5 331.2Z" fill="#3bb44a"/>
  <path d="M742 326.3 L750.8 314.8 L759.9 307.8 L769.6 320.1 L763.5 331.2Z" fill="none" stroke="#1f6e2b" stroke-width="0.4"/>
  <!-- purple cone -->
  <path d="M806 307.8 L795.1 327.1 A10.9 5.6 0 0 0 816.9 327.1Z" fill="url(#purp)"/>
  <!-- teal half cylinder -->
  <path d="M841.8 325.4 L853.2 308.6 Q858.5 305 864 307.5 Q871 311 870 317 L864.7 330.7 Q852 330 841.8 325.4Z" fill="#52a9b9"/>
  <path d="M853.2 308.6 Q858.5 305 864 307.5 Q871 311 870 317 L864.7 330.7 Q866 318 853.2 308.6Z" fill="#6cc7d6"/>
  <!-- TEXT -->
  <g transform="rotate(10 757 376)" font-family="Liberation Sans" font-weight="bold" font-style="italic" font-size="12.5">
  <text x="742.5" y="383" fill="#8e0c1a" stroke="#8e0c1a" stroke-width="1.2" textLength="29">TEXT</text>
  <text x="741.8" y="381.8" fill="#c8142a" stroke="#c8142a" stroke-width="0.7" textLength="29">TEXT</text>
  </g>
  <!-- blue pentagon -->
  <path d="M790.7 371.4 L814.5 374.9 L818.9 382.9 L813.6 395.2 L792.5 390.8Z" fill="#2b4791"/>
  <path d="M814.5 374.9 L818.9 382.9 L813.6 395.2Z" fill="#22397a"/>
  <!-- yellow pyramid -->
  <path d="M855.9 367.9 L842.3 390.4 L863.8 395.2Z" fill="#e6c21b"/>
  <path d="M855.9 367.9 L863.8 395.2 L869.1 382.9Z" fill="#f3d627"/>
  <path d="M855.9 367.9 L842.3 390.4 L863.8 395.2 L869.1 382.9Z" fill="none" stroke="#a88a10" stroke-width="0.5"/>
  <!-- magenta dome -->
  <path d="M745 445 Q745 431 756.4 431 Q767.9 431 767.9 445 Q756.4 451 745 445Z" fill="url(#mag)"/>
  <!-- navy hex -->
  <path d="M795.1 425.2 L804.8 421.7 L815.9 423.1 L818.9 429.6 L817.1 449 L808.3 454.3 L797.8 451.7 L796 443.7Z" fill="#2b4694"/>
  <path d="M795.1 425.2 L808.5 428.5 L818.9 429.6 M808.5 428.5 L808.3 454.3" fill="none" stroke="#1f3575" stroke-width="0.6"/>
  <!-- white paraboloid -->
  <path d="M856.8 427 Q850 430 845.3 446.4 Q845 452 856.5 453.4 Q868 452 867.7 446.4 Q863.5 430 856.8 427Z" fill="url(#wht)" stroke="#8f9394" stroke-width="0.5"/>
</svg>


<!-- ===== Taskbar ===== -->
<div class="a" style="left:0;top:470px;width:886px;height:28px;background:#1f1f1f"></div>
<svg style="left:0;top:0" width="886" height="498">
  <defs>
    <radialGradient id="sun" cx="0.35" cy="0.3" r="0.8"><stop offset="0" stop-color="#ffe066"/><stop offset="1" stop-color="#f2a100"/></radialGradient>
    <linearGradient id="winb" x1="0" y1="0" x2="1" y2="1"><stop offset="0" stop-color="#5ad1ff"/><stop offset="1" stop-color="#1c8fe0"/></linearGradient>
    <linearGradient id="teams" x1="0" y1="0" x2="1" y2="1"><stop offset="0" stop-color="#8a7cf0"/><stop offset="1" stop-color="#5b4ac8"/></linearGradient>
  </defs>
  <circle cx="19" cy="484" r="5.4" fill="url(#sun)"/>
  <!-- windows -->
  <g fill="url(#winb)">
    <rect x="296.3" y="477.6" width="6.6" height="6.6"/><rect x="303.7" y="477.6" width="6.6" height="6.6"/>
    <rect x="296.3" y="484.9" width="6.6" height="6.6"/><rect x="303.7" y="484.9" width="6.6" height="6.6"/>
  </g>
  <!-- search -->
  <circle cx="330.7" cy="483" r="4.4" fill="none" stroke="#f2f2f2" stroke-width="1.3"/>
  <path d="M327.5 486.4 L323.8 490.3" stroke="#f2f2f2" stroke-width="1.5"/>
  <!-- task view -->
  <rect x="346.5" y="482" width="10" height="9" rx="1" fill="#6b6b6b"/>
  <rect x="350.5" y="478" width="11" height="9.5" rx="1" fill="#d8d8d8"/>
  <!-- teams chat -->
  <path d="M379.3 477.8 A6.9 6.9 0 1 1 375 490 L372.6 492 L373.5 488.3 A6.9 6.9 0 0 1 379.3 477.8Z" fill="url(#teams)"/>
  <rect x="375.8" y="482" width="5.5" height="4.5" rx="0.8" fill="#fff"/>
  <path d="M381.3 483.3 L383.5 482 V486.5 L381.3 485.2Z" fill="#fff"/>
  <!-- snip active -->
  <rect x="393.3" y="472.7" width="22.6" height="22.6" rx="2.5" fill="#2f2f2f"/>
  <rect x="398.5" y="477.5" width="11" height="11" rx="1.2" fill="#f3f3f3"/>
  <rect x="400.5" y="479.5" width="6" height="6" fill="none" stroke="#e04a3a" stroke-width="0.9" stroke-dasharray="1.2 0.8"/>
  <path d="M404 490 L412 483 M404 483 L412 490" stroke="#1aa0e8" stroke-width="1.2"/>
  <rect x="400.5" y="492.6" width="9.1" height="1.6" rx="0.8" fill="#4cc2ff"/>
  <!-- sticky notes -->
  <path d="M424.3 477.8 H436.6 V487 L432.5 491 H424.3Z" fill="#f8d20d"/>
  <path d="M432.5 491 V487 H436.6Z" fill="#3a3a3a"/>
  <!-- folder -->
  <path d="M448.8 479.5 Q448.8 477.8 450.5 477.8 H454.5 L456 479.3 H461.5 Q463.1 479.3 463.1 481 V489 Q463.1 490.8 461.5 490.8 H450.5 Q448.8 490.8 448.8 489Z" fill="#f5c033"/>
  <rect x="448.8" y="484" width="14.3" height="3.2" fill="#2f8ee0"/>
  <path d="M448.8 487.2 H463.1 V489 Q463.1 490.8 461.5 490.8 H450.5 Q448.8 490.8 448.8 489Z" fill="#ffd75e"/>
  <!-- orange app -->
  <rect x="474.3" y="477.3" width="14.1" height="14" rx="1" fill="#e8772e"/>
  <circle cx="481.3" cy="484.3" r="4.3" fill="none" stroke="#f9c9a4" stroke-width="1"/>
  <rect x="479.2" y="483" width="4.2" height="3" fill="#f9d7bd"/>
  <!-- chrome -->
  <circle cx="506.5" cy="484.2" r="6.6" fill="#db3a2e"/>
  <path d="M506.5 484.2 L500.8 480.9 A6.6 6.6 0 0 0 503.2 489.9Z" fill="#1f9b48"/>
  <path d="M506.5 484.2 L503.2 489.9 A6.6 6.6 0 0 0 513.1 484.2Z" fill="#f5c518"/>
  <circle cx="506.5" cy="484.2" r="3.1" fill="#fff"/>
  <circle cx="506.5" cy="484.2" r="2.3" fill="#2a7de1"/>
  <rect x="504" y="493.3" width="5" height="1.3" rx="0.6" fill="#9a9a9a"/>
  <!-- word -->
  <rect x="528.5" y="477.6" width="10.5" height="13.2" rx="1" fill="#2b7cd3"/>
  <rect x="528.5" y="481" width="10.5" height="3.2" fill="#41a5ee"/>
  <rect x="524.8" y="480.6" width="8" height="8" rx="0.8" fill="#185abd"/>
  <text x="528.8" y="487" font-family="Liberation Sans" font-size="6.5" font-weight="bold" fill="#fff" text-anchor="middle">W</text>
  <rect x="529.5" y="493.3" width="5" height="1.3" rx="0.6" fill="#9a9a9a"/>
  <!-- whatsapp 1 -->
  <path d="M557.3 477.8 A6.8 6.8 0 1 1 553.6 489.7 L550.4 490.8 L551.4 487.8 A6.8 6.8 0 0 1 557.3 477.8Z" fill="#fff"/>
  <circle cx="557.3" cy="484.5" r="5.3" fill="#29c65a"/>
  <path d="M555 482 Q555 486.5 559.5 487.5 L560.5 486.5 L559 485.8 L558.3 486.3 Q556.5 485.5 556 483.8 L556.6 483.1 L555.9 481.6Z" fill="#fff"/>
  <circle cx="562.8" cy="478.6" r="3.8" fill="#e81123"/>
  <text x="562.8" y="481" font-family="Liberation Sans" font-size="6" font-weight="bold" fill="#fff" text-anchor="middle">2</text>
  <rect x="554.3" y="493.3" width="5" height="1.3" rx="0.6" fill="#9a9a9a"/>
  <!-- whatsapp 2 -->
  <path d="M583 477.8 A6.8 6.8 0 1 1 579.3 489.7 L576.1 490.8 L577.1 487.8 A6.8 6.8 0 0 1 583 477.8Z" fill="#fff"/>
  <circle cx="583" cy="484.5" r="5.3" fill="#29c65a"/>
  <path d="M580.7 482 Q580.7 486.5 585.2 487.5 L586.2 486.5 L584.7 485.8 L584 486.3 Q582.2 485.5 581.7 483.8 L582.3 483.1 L581.6 481.6Z" fill="#fff"/>
  <rect x="580.5" y="493.3" width="5" height="1.3" rx="0.6" fill="#9a9a9a"/>
  <!-- tray -->
  <path d="M707.5 486 L711.2 482.2 L715 486" stroke="#d8d8d8" stroke-width="0.9" fill="none"/>
  <path d="M720.5 487.3 H729.8 Q730.5 484 727.5 483.5 Q726 480.5 723.5 481.5 Q721.5 482 721.7 484.5 Q720 485 720.5 487.3Z" fill="#f0f0f0"/>
  <rect x="739.5" y="478.5" width="3.5" height="7" rx="1.75" fill="none" stroke="#3aa0f0" stroke-width="1"/>
  <path d="M738 484 Q738 487.5 741.25 487.5 Q744.5 487.5 744.5 484 M741.25 487.5 V489.2" stroke="#3aa0f0" stroke-width="0.9" fill="none"/>
  <path d="M780.5 481.5 Q785.2 477.5 790 481.5 M782 483.2 Q785.2 480.6 788.5 483.2 M783.5 485 Q785.2 483.6 787 485" stroke="#ececec" stroke-width="0.9" fill="none"/>
  <circle cx="785.2" cy="486.8" r="0.9" fill="#ececec"/>
  <path d="M794 482.3 H796 L799 479.5 V489 L796 486.3 H794Z" fill="none" stroke="#ececec" stroke-width="0.9"/>
  <path d="M801 481.5 Q803 484.3 801 487" stroke="#8a8a8a" stroke-width="0.8" fill="none"/>
  <rect x="807.2" y="481.3" width="9.3" height="5.6" rx="1" fill="none" stroke="#ececec" stroke-width="0.9"/>
  <rect x="808.5" y="482.6" width="4" height="3" fill="#ececec"/>
  <rect x="816.6" y="483" width="1" height="2.2" fill="#ececec"/>
  <circle cx="869.6" cy="484.2" r="6" fill="#1592e8"/>
  <text x="869.6" y="486.5" font-family="Liberation Sans" font-size="6" fill="#0b1e33" text-anchor="middle">21</text>
</svg>
<div class="t" style="left:30px;top:476.6px;font-size:6.6px;color:#fff;font-weight:bold;letter-spacing:-0.2px">14°C</div>
<div class="t" style="left:30px;top:485.6px;font-size:6.6px;color:#d6d6d6">Soleado</div>
<div class="t" style="left:757px;top:477.3px;font-size:6.6px;color:#f0f0f0">ESP</div>
<div class="t" style="left:757px;top:486.3px;font-size:6.6px;color:#f0f0f0">LAA</div>
<div class="t" style="left:820px;top:477.2px;width:40.7px;text-align:right;font-size:6.8px;color:#f0f0f0">15:47</div>
<div class="t" style="left:820px;top:486.1px;width:40.7px;text-align:right;font-size:6.9px;color:#f0f0f0">18/05/2022</div>


<!-- ===== Call popup ===== -->
<div class="a" style="left:652px;top:24px;width:222px;height:57.7px;background:#2b2b2b;border-radius:4px;box-shadow:0 3px 12px rgba(0,0,0,0.3);border:1px solid #3a3a3a"></div>
<svg style="left:652px;top:24.5px" width="222" height="58">
  <clipPath id="avc"><circle cx="17.5" cy="16" r="10.5"/></clipPath>
  <g clip-path="url(#avc)">
  <rect x="7" y="5" width="21" height="22" fill="#ececec"/>
  <rect x="7" y="5" width="6" height="22" fill="#cfcfcf"/>
  <path d="M10 28 Q11 21.5 16.5 21 Q23 21.5 24.5 28Z" fill="#5a5a5a"/>
  <path d="M14.5 22 L17 25 L19.5 22Z" fill="#d8d8d8"/>
  <ellipse cx="16.8" cy="14.2" rx="3.4" ry="4.8" fill="#262626"/>
  </g>
  <!-- video -->
  <rect x="128.6" y="13" width="7.6" height="5.6" rx="0.7" fill="none" stroke="#e6e6e6" stroke-width="0.9"/>
  <path d="M136.2 14.6 L138.8 13.3 V18.3 L136.2 17" fill="none" stroke="#e6e6e6" stroke-width="0.9"/>
  <!-- mic -->
  <rect x="155.5" y="9.5" width="4.6" height="8" rx="2.3" fill="none" stroke="#e6e6e6" stroke-width="1"/>
  <path d="M154 15 Q154 19.5 157.8 19.5 Q161.6 19.5 161.6 15 M157.8 19.5 V21" fill="none" stroke="#e6e6e6" stroke-width="0.9"/>
  <g fill="#e6e6e6"><circle cx="177" cy="15.5" r="0.8"/><circle cx="180.5" cy="15.5" r="0.8"/><circle cx="184" cy="15.5" r="0.8"/></g>
  <rect x="193" y="6.3" width="23" height="18.7" fill="#ee3a2f"/>
  <path d="M200.3 17.4 Q199.6 13.8 204.5 13.8 Q209.4 13.8 208.7 17.4 L206.9 17.4 L206.8 16.2 Q204.5 15.5 202.2 16.2 L202.1 17.4Z" fill="none" stroke="#fff" stroke-width="0.8"/>
  <path d="M5.5 42.2V44.0M7.5 42.2V44.0M9.5 42.1V44.1M13.5 41.9V44.3M17.5 41.6V44.6M19.5 41.5V44.7M27.5 40.9V45.3M29.5 40.9V45.3M31.5 40.4V45.8M37.5 39.5V46.7M39.5 39.5V46.7M43.5 38.3V47.9M45.5 38.4V47.8M47.5 37.6V48.6M53.5 36.4V49.8M55.5 36.7V49.5M57.5 36.8V49.4M59.5 35.3V50.9M61.5 34.9V51.3M63.5 35.0V51.2M65.5 35.0V51.2M67.5 34.2V52.0M69.5 35.0V51.2M71.5 36.0V50.2M73.5 35.1V51.1M77.5 36.0V50.2M79.5 36.6V49.6M83.5 36.4V49.8M87.5 35.5V50.7M89.5 36.1V50.1M91.5 35.1V51.1M93.5 34.5V51.7M95.5 35.6V50.6M97.5 35.4V50.8M103.5 35.5V50.7M107.5 35.9V50.3M109.5 35.0V51.2M111.5 33.5V52.7M113.5 34.3V51.9M117.5 34.1V52.1M119.5 34.5V51.7M121.5 35.8V50.4M123.5 36.6V49.6M133.5 37.0V49.2M135.5 37.3V48.9M139.5 37.1V49.1M143.5 36.0V50.2M145.5 36.4V49.8M153.5 36.6V49.6M159.5 35.1V51.1M161.5 34.3V51.9M163.5 35.4V50.8M165.5 35.4V50.8M167.5 34.5V51.7M171.5 33.2V53.0M173.5 32.6V53.6M175.5 32.8V53.4M177.5 34.5V51.7M183.5 35.2V51.0M185.5 34.0V52.2M187.5 34.3V51.9M189.5 34.7V51.5M195.5 36.6V49.6M197.5 36.6V49.6M199.5 37.3V48.9M201.5 38.5V47.7M203.5 37.9V48.3M205.5 38.6V47.6M207.5 39.8V46.4M209.5 40.1V46.1M211.5 40.2V46.0M213.5 41.1V45.1M219.5 42.1V44.1" stroke="#4fae62" stroke-width="1" fill="none"/><path d="M1.5 42.4V43.8M3.5 42.2V44.0M11.5 42.0V44.2M15.5 41.9V44.3M21.5 41.1V45.1M23.5 41.0V45.2M25.5 41.2V45.0M33.5 40.3V45.9M35.5 40.3V45.9M41.5 39.0V47.2M49.5 36.8V49.4M51.5 35.8V50.4M75.5 34.9V51.3M81.5 36.3V49.9M85.5 36.2V50.0M99.5 34.1V52.1M101.5 35.6V50.6M105.5 34.7V51.5M115.5 34.2V52.0M125.5 36.7V49.5M127.5 36.6V49.6M129.5 36.4V49.8M131.5 37.1V49.1M137.5 36.4V49.8M141.5 36.9V49.3M147.5 36.9V49.3M149.5 36.3V49.9M151.5 35.2V51.0M155.5 35.5V50.7M157.5 35.3V50.9M169.5 34.7V51.5M179.5 34.4V51.8M181.5 35.4V50.8M191.5 36.5V49.7M193.5 36.9V49.3M215.5 41.3V44.9M217.5 42.0V44.2" stroke="#6cc97c" stroke-width="1" fill="none"/>
</svg>
<div class="t" style="left:685px;top:30.8px;font-size:9.4px;color:#f2f2f2;-webkit-text-stroke:0.25px #f2f2f2">Fredy camarena (U</div>
<div class="t" style="left:685px;top:46.3px;font-size:6.8px;color:#c4c4c4">2:29</div>

</body></html>
